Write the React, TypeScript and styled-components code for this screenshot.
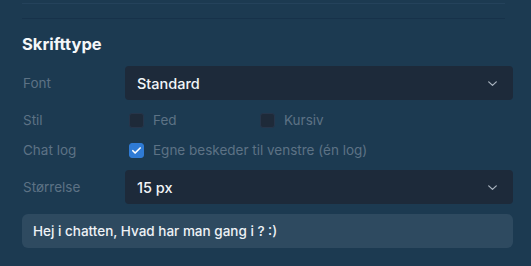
import * as React from 'react';
import styled, { createGlobalStyle } from 'styled-components';

const GlobalStyle = createGlobalStyle`
    html, body {
        margin: 0;
        padding: 0;
        background: #1c3a51;
    }
    body {
        font-family: Inter, 'Noto Sans', sans-serif;
        -webkit-font-smoothing: antialiased;
    }
`;

const App: React.FC = () => {
    const [ownLeft, setOwnLeft] = React.useState(true);
    const [bold, setBold] = React.useState(false);
    const [italic, setItalic] = React.useState(false);

    return (
        <Root>
            <GlobalStyle />
            <Dividers>
                <Divider tone={'light'} />
                <Divider tone={'dark'} />
            </Dividers>
            <Header>Skrifttype</Header>
            <Form>
                <SelectRow after={5}>
                    <Label>Font</Label>
                    <Select value={'Standard'} />
                </SelectRow>
                <CheckRow>
                    <Label>Stil</Label>
                    <CheckGroup>
                        <Check label={'Fed'} checked={bold} onToggle={() => setBold(!bold)} />
                        <Check label={'Kursiv'} checked={italic} onToggle={() => setItalic(!italic)} />
                    </CheckGroup>
                </CheckRow>
                <CheckRow>
                    <Label>Chat log</Label>
                    <Check
                        label={'Egne beskeder til venstre (én log)'}
                        checked={ownLeft}
                        onToggle={() => setOwnLeft(!ownLeft)}
                    />
                </CheckRow>
                <SelectRow before={5} after={10}>
                    <Label>Størrelse</Label>
                    <Select value={'15 px'} />
                </SelectRow>
                <Preview>Hej i chatten, Hvad har man gang i ? :)</Preview>
            </Form>
        </Root>
    );
};

const Select: React.FC<{ value: string }> = ({ value }) => (
    <SelectBox>
        <span>{value}</span>
        <svg width="13" height="13" viewBox="0 0 24 24" fill="none">
            <path d="M5 9l7 6.5L19 9" stroke="#a9b3bf" strokeWidth="2.4" strokeLinecap="round" strokeLinejoin="round" />
        </svg>
    </SelectBox>
);

type CheckProps = { label: string; checked: boolean; onToggle: () => void };

const Check: React.FC<CheckProps> = ({ label, checked, onToggle }) => (
    <CheckLabel onClick={onToggle}>
        <Box checked={checked}>
            {checked && (
                <svg width="11" height="11" viewBox="0 0 24 24" fill="none">
                    <path d="M4 12.5l5 5L20 6.5" stroke="#fff" strokeWidth="3.6" strokeLinecap="round" strokeLinejoin="round" />
                </svg>
            )}
        </Box>
        <span>{label}</span>
    </CheckLabel>
);

const Root = styled.div`
    box-sizing: border-box;
    width: 531px;
    height: 266px;
    padding: 3px 18px 0 22px;
    overflow: hidden;
`;

const Dividers = styled.div`
    display: grid;
    grid-row-gap: 14px;
    margin-right: 8px;
`;

const Divider = styled.div<{ tone: 'light' | 'dark' }>`
    height: 1px;
    background: ${(p) => (p.tone === 'light' ? '#24425b' : '#17324a')};
`;

const Header = styled.h2`
    margin: 10px 0 0;
    height: 30px;
    font-size: 16.5px;
    font-weight: 700;
    line-height: 30px;
    color: #f4f7fa;
`;

const Form = styled.div`
    display: flex;
    flex-direction: column;
    margin-top: 7px;
`;

const SelectRow = styled.div<{ before?: number; after?: number }>`
    display: grid;
    grid-template-columns: 103px 1fr;
    align-items: center;
    margin-top: ${(p) => p.before || 0}px;
    margin-bottom: ${(p) => p.after || 0}px;
`;

const CheckRow = styled.div`
    display: grid;
    grid-template-columns: 103px 1fr;
    align-items: center;
    height: 30px;
`;

const Label = styled.div`
    padding-left: 1px;
    font-size: 13.5px;
    color: #5d7285;
`;

const SelectBox = styled.div`
    display: flex;
    align-items: center;
    justify-content: space-between;
    height: 34px;
    padding: 0 14px 0 12px;
    border-radius: 4px;
    background: #1d2a3a;
    font-size: 14.5px;
    font-weight: 500;
    color: #f2f5f8;
`;

const CheckGroup = styled.div`
    display: grid;
    grid-template-columns: 131px auto;
    justify-content: start;
`;

const CheckLabel = styled.label`
    display: flex;
    align-items: center;
    gap: 9px;
    padding-left: 4px;
    font-size: 13.5px;
    color: #5d7285;
    cursor: pointer;
`;

const Box = styled.span<{ checked: boolean }>`
    box-sizing: border-box;
    display: flex;
    align-items: center;
    justify-content: center;
    width: 15px;
    height: 15px;
    border-radius: 3px;
    background: ${(p) => (p.checked ? '#2f7bd5' : '#1e2a39')};
    border: 1px solid ${(p) => (p.checked ? '#2f7bd5' : '#26354a')};
`;

const Preview = styled.div`
    display: flex;
    align-items: center;
    height: 34px;
    padding: 0 11px;
    border-radius: 6px;
    background: #2e4a60;
    font-size: 13.5px;
    font-weight: 500;
    color: #eef2f6;
`;

export default App;
